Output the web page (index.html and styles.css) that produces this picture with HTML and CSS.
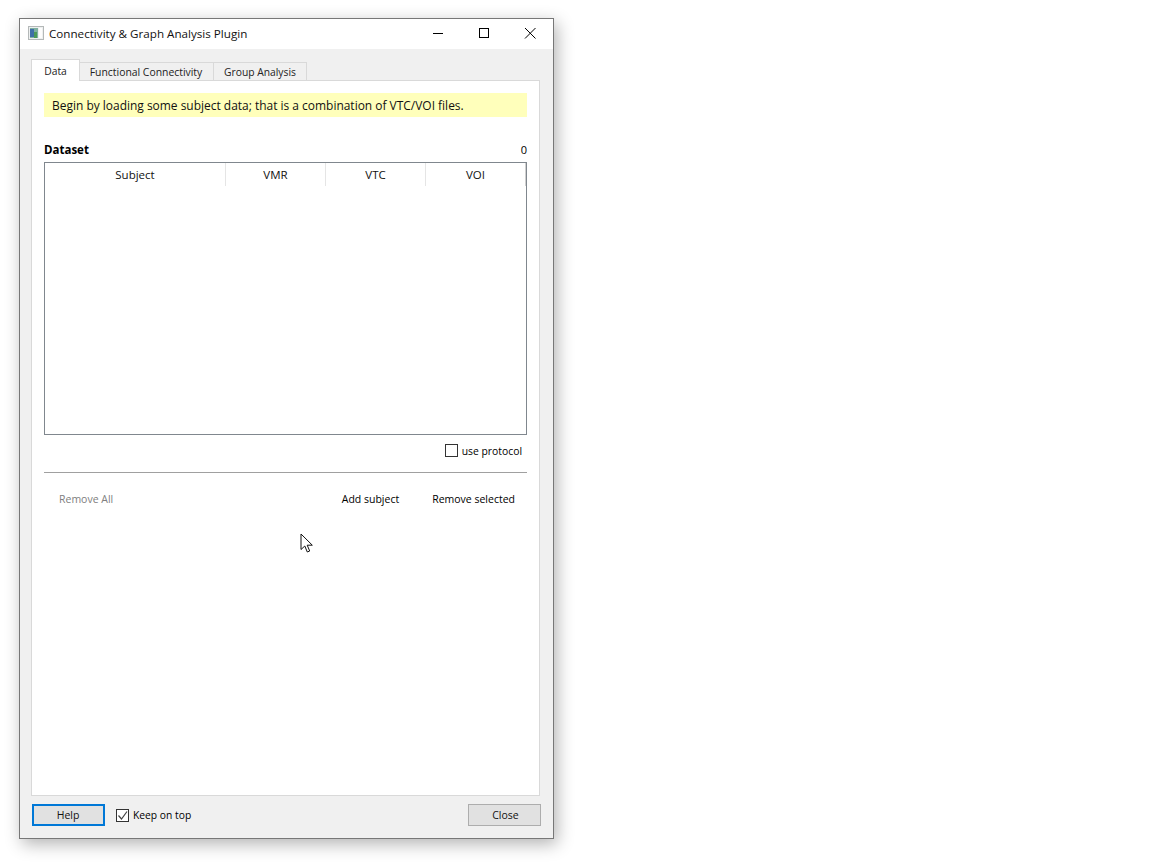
FILE: index.html
```html
<!DOCTYPE html>
<html lang="en">
<head>
<meta charset="utf-8">
<title>Connectivity &amp; Graph Analysis Plugin</title>
<link rel="stylesheet" href="styles.css">
</head>
<body>
<div class="window">
  <header class="titlebar">
    <svg class="app-icon" width="16" height="14" viewBox="0 0 16 14">
      <rect x="0.5" y="0.5" width="15" height="13" fill="#eef0f0" stroke="#b4b8b8"/>
      <rect x="2" y="2" width="8" height="10" fill="#7fb0a0"/>
      <rect x="2" y="3" width="4" height="8" fill="#3f6fa8"/>
      <rect x="6" y="6" width="3" height="6" fill="#4c9a58"/>
      <rect x="11" y="2" width="3" height="10" fill="#fdfdfd"/>
    </svg>
    <span class="title">Connectivity &amp; Graph Analysis Plugin</span>
    <div class="caption-buttons">
      <svg class="cap" width="46" height="30" viewBox="0 0 46 30"><path d="M18 15.5h10" stroke="#000" fill="none"/></svg>
      <svg class="cap" width="46" height="30" viewBox="0 0 46 30"><rect x="18.5" y="10.5" width="9" height="9" stroke="#000" fill="none"/></svg>
      <svg class="cap" width="46" height="30" viewBox="0 0 46 30"><path d="M18 10l10.500 10.500M28.500 10L18 20.500" stroke="#000" fill="none"/></svg>
    </div>
  </header>
  <div class="content">
    <nav class="tabs">
      <div class="tab active">Data</div>
      <div class="tab func">Functional Connectivity</div>
      <div class="tab group">Group Analysis</div>
    </nav>
    <main class="pane">
      <div class="notice">Begin by loading some subject data; that is a combination of VTC/VOI files.</div>
      <div class="dataset-head"><strong>Dataset</strong><span>0</span></div>
      <div class="table">
        <div class="thead">
          <div class="th subject">Subject</div>
          <div class="th">VMR</div>
          <div class="th">VTC</div>
          <div class="th last">VOI</div>
        </div>
      </div>
      <div class="protocol-row">
        <span class="checkbox"></span><span class="protocol-label">use protocol</span>
      </div>
      <hr class="rule">
      <div class="actions">
        <span class="disabled">Remove All</span>
        <span class="add">Add subject</span>
        <span class="remove">Remove selected</span>
      </div>
    </main>
    <footer class="footer">
      <button class="btn focused">Help</button>
      <span class="checkbox checked">
        <svg width="11" height="11" viewBox="0 0 11 11"><path d="M1.500 5.500l3 3.500 5.500-7.500" stroke="#444" stroke-width="1.200" fill="none"/></svg>
      </span>
      <span class="keep">Keep on top</span>
      <button class="btn close">Close</button>
    </footer>
  </div>
</div>
<svg class="cursor" width="14" height="21" viewBox="0 0 14 21">
  <path d="M1 1v15.500l3.800-3.500 2.500 6 2.400-1-2.500-5.800h5.100z" fill="#fff" stroke="#111" stroke-width="1"/>
</svg>
</body>
</html>
```
FILE: styles.css
```css
* { box-sizing: border-box; }
html, body { margin: 0; padding: 0; background: #fff; }
body {
  height: 867px;
  overflow: hidden;
  position: relative;
  padding: 18px 0 0 19px;
  font-family: "Open Sans", "Noto Sans", sans-serif;
  font-size: 11px;
  color: #000;
}
.window {
  width: 535px;
  height: 821px;
  border: 1px solid #777;
  background: #f0f0f0;
  box-shadow: 3px 5px 16px rgba(0,0,0,.3);
  display: flex;
  flex-direction: column;
}
.titlebar {
  height: 30px;
  background: #fff;
  display: flex;
  align-items: center;
  padding-left: 8px;
  flex: none;
}
.app-icon { flex: none; margin-top: -2px; }
.title { margin-left: 5px; font-size: 11.650px; color: #111; margin-top: -1px; }
.caption-buttons { margin-left: auto; display: flex; margin-top: -2px; }
.cap { display: block; flex: none; margin-left: 0; }
.content {
  flex: 1;
  display: flex;
  flex-direction: column;
  padding: 10px 12px 0 11px;
  min-height: 0;
}
.tabs { display: flex; align-items: flex-end; height: 22px; position: relative; z-index: 1; flex: none; }
.tab {
  height: 19px;
  background: #f0f0f0;
  border: 1px solid #d9d9d9;
  border-left: 0;
  text-align: center;
  line-height: 18px;
  font-size: 10.300px;
  color: #222;
}
.tab.active {
  width: 49px;
  height: 22px;
  background: #fff;
  border-left: 1px solid #d9d9d9;
  border-bottom: 0;
  line-height: 22px;
}
.tab.func { width: 134px; padding-right: 1px; font-size: 10.400px; }
.group { width: 93px; }
.pane {
  height: 716px;
  width: 509px;
  margin-top: -1px;
  background: #fff;
  border: 1px solid #d9d9d9;
  padding: 12px 12px 0;
  flex: none;
}
.notice {
  height: 24px;
  background: #ffffbb;
  line-height: 25px;
  padding-left: 8px;
  font-size: 11.960px;
  color: #111;
}
.dataset-head {
  margin-top: 24px;
  height: 21px;
  display: flex;
  justify-content: space-between;
  align-items: center;
  padding: 0 0 4px 0;
  font-size: 11.500px;
}
.dataset-head span { font-size: 11px; }
.table {
  height: 273px;
  border: 1px solid #80878e;
  background: #fff;
}
.thead { display: flex; height: 23px; }
.th {
  width: 100px;
  border-right: 1px solid #e5e5e5;
  text-align: center;
  line-height: 23px;
  font-size: 11.500px;
  color: #111;
}
.subject { width: 181px; }
.last { border-right: 1px solid #d0d0d0; }
.protocol-row {
  height: 32px;
  display: flex;
  align-items: center;
  justify-content: flex-end;
  padding: 0 5px 1px 0;
}
.checkbox {
  width: 13px;
  height: 13px;
  border: 1px solid #333;
  background: #fff;
  display: block;
  flex: none;
}
.protocol-label { margin-left: 4px; font-size: 10.350px; }
.rule { margin: 5px 0 0; border: 0; border-top: 1px solid #a0a0a0; height: 1px; }
.actions {
  display: flex;
  align-items: center;
  height: 52px;
  padding-left: 15px;
  font-size: 10.500px;
}
.disabled { color: #808080; }
.add { margin-left: auto; }
.remove { margin-left: 33px; margin-right: 12px; }
.footer {
  display: flex;
  align-items: center;
  height: 42px;
  flex: none;
  padding-bottom: 4px;
}
.btn {
  width: 73px;
  height: 22px;
  padding: 0;
  background: #e1e1e1;
  border: 1px solid #adadad;
  font-family: inherit;
  font-size: 10.500px;
  color: #111;
  flex: none;
}
.focused { border: 2px solid #0078d7; margin-left: 1px; padding-right: 1px; }
.checked { margin-left: 11px; display: flex; align-items: center; justify-content: center; background: #fff; }
.keep { margin-left: 4px; font-size: 10.300px; }
.close { margin-left: auto; margin-right: 0; padding-left: 2px; }
.cursor { position: absolute; left: 300px; top: 533px; }
```
